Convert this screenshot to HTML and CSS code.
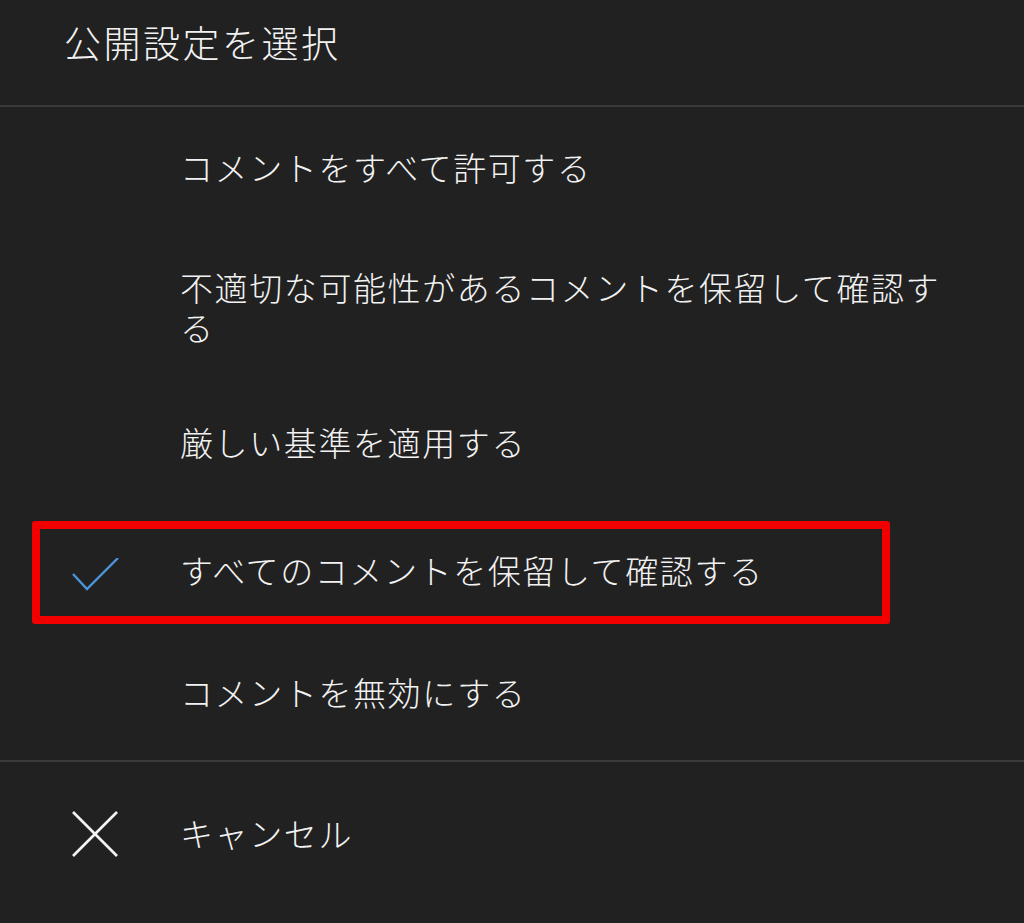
FILE: index.html
```html
<!DOCTYPE html>
<html lang="ja">
<head>
    <meta charset="UTF-8">
    <meta name="viewport" content="width=device-width, initial-scale=1.0">
    <title>公開設定を選択</title>
    <link rel="stylesheet" href="styles.css">
</head>
<body>

<header class="sheet-title">公開設定を選択</header>

<ul class="option-list">
    <li class="option">
        <span class="option-icon"></span>
        <span class="option-text">コメントをすべて許可する</span>
    </li>
    <li class="option">
        <span class="option-icon"></span>
        <span class="option-text">不適切な可能性があるコメントを保留して確認する</span>
    </li>
    <li class="option option-tight">
        <span class="option-icon"></span>
        <span class="option-text">厳しい基準を適用する</span>
    </li>
    <li class="option selected">
        <span class="option-icon">
            <svg width="48" height="36" viewBox="0 0 48 36">
                <polyline points="1,16 15,31 46,0" fill="none" stroke="#4a95d8" stroke-width="2.4"/>
            </svg>
        </span>
        <span class="option-text">すべてのコメントを保留して確認する</span>
        <!-- 注釈の赤枠 -->
        <span class="highlight-box"></span>
    </li>
    <li class="option option-last">
        <span class="option-icon"></span>
        <span class="option-text">コメントを無効にする</span>
    </li>
</ul>

<div class="cancel-row">
    <span class="option-icon">
        <svg width="46" height="46" viewBox="0 0 46 46">
            <line x1="1" y1="1" x2="45" y2="45" stroke="#f2f2f2" stroke-width="2.6"/>
            <line x1="45" y1="1" x2="1" y2="45" stroke="#f2f2f2" stroke-width="2.6"/>
        </svg>
    </span>
    <span class="option-text">キャンセル</span>
</div>

</body>
</html>
```

FILE: styles.css
```css
body {
    font-family: "Noto Sans CJK JP", "Noto Sans", sans-serif;
    font-weight: 300;
    background-color: #212121;
    color: #f2f2f2;
    margin: 0;
    padding: 0;
    height: 923px;
    overflow: hidden;
}
.sheet-title {
    box-sizing: border-box;
    height: 107px;
    padding: 17px 0 0 64px;
    font-size: 37px;
    line-height: 50px;
    letter-spacing: 2.5px;
    border-bottom: 2px solid #3a3a3a;
}
.option-list {
    list-style: none;
    margin: 0;
    padding: 0 75px 0 0;
    border-bottom: 2px solid #3a3a3a;
}
.option,
.cancel-row {
    display: grid;
    grid-template-columns: 180px 1fr;
    align-items: center;
    font-size: 33px;
    line-height: 40px;
    letter-spacing: 1.6px;
}
.option {
    position: relative;
    padding: 40px 0;
}
.option-tight {
    padding: 35px 0 44px;
}
.option-last {
    padding: 38px 0 48px;
}
.option-icon {
    display: flex;
    align-items: center;
    padding-left: 72px;
}
.selected .option-icon svg {
    margin-top: 12px;
}
.highlight-box {
    position: absolute;
    left: 32px;
    top: 15px;
    width: 858px;
    height: 103px;
    box-sizing: border-box;
    border: 8px solid #f20000;
    border-radius: 3px;
}
.cancel-row {
    padding-top: 47px;
    line-height: 42px;
}
.cancel-row .option-icon svg {
    margin-top: 2px;
}
```
